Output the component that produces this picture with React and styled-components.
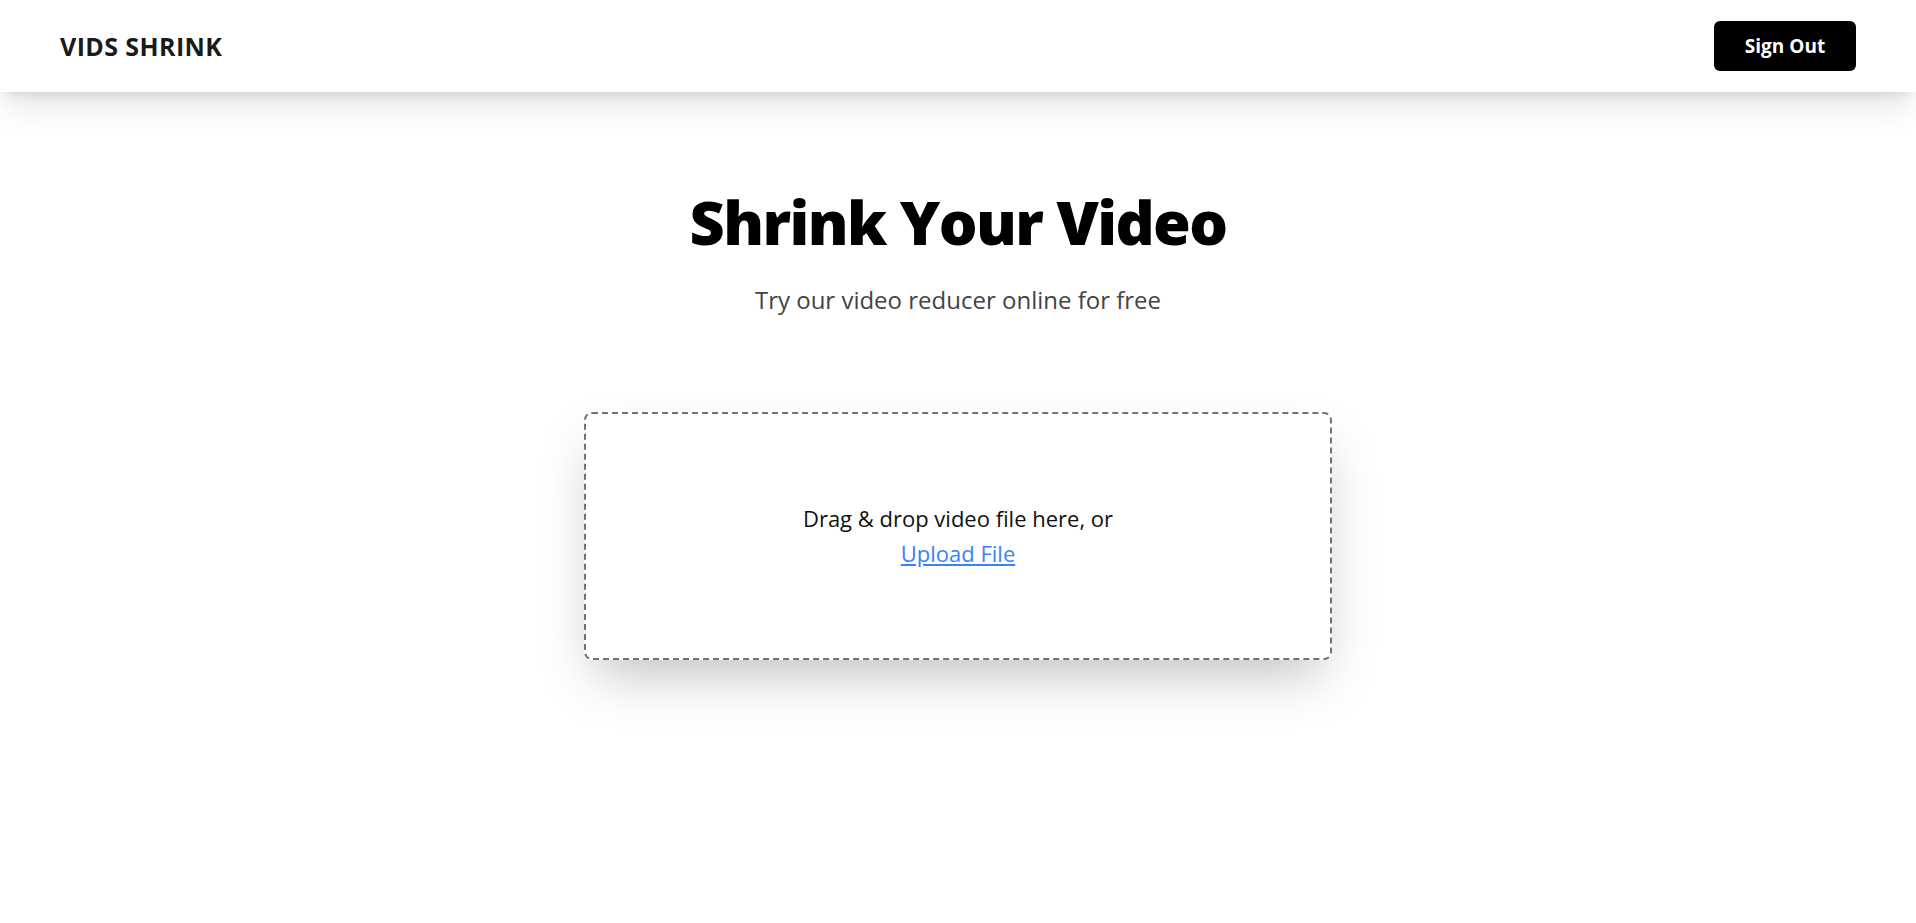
import React from "react";
import styled, { createGlobalStyle } from "styled-components";

const GlobalStyle = createGlobalStyle`
    html, body {
        margin: 0;
        padding: 0;
        background: #fff;
        font-family: "Open Sans", "Noto Sans", sans-serif;
        color: #111;
    }
`;

const Page = styled.div`
    min-height: 100vh;
`;

const Header = styled.header`
    height: 92px;
    padding: 0 60px;
    display: flex;
    align-items: center;
    justify-content: space-between;
    background: #fff;
    box-shadow: 0 20px 30px -5px rgba(0, 0, 0, 0.1), 0 8px 10px -6px rgba(0, 0, 0, 0.1);
    position: relative;
`;

const Logo = styled.div`
    font-size: 25px;
    font-weight: 700;
    letter-spacing: 0.4px;
    color: #1a1a1a;
`;

const SignOut = styled.button`
    width: 142px;
    height: 50px;
    border: none;
    border-radius: 6px;
    background: #000;
    color: #fff;
    font-family: inherit;
    font-size: 19px;
    font-weight: 700;
    cursor: pointer;
`;

const Main = styled.main`
    display: flex;
    flex-direction: column;
    align-items: center;
    padding: 92px 0 120px;
`;

const Title = styled.h1`
    margin: 0;
    font-size: 61px;
    line-height: 76px;
    font-weight: 800;
    letter-spacing: -1.6px;
    color: #000;
`;

const Subtitle = styled.p`
    margin: 24px 0 0;
    font-size: 24px;
    line-height: 32px;
    color: #444;
`;

const DropZone = styled.div`
    margin-top: 96px;
    width: 748px;
    height: 248px;
    box-sizing: border-box;
    border: 2px dashed #6b7280;
    border-radius: 8px;
    box-shadow: 0 25px 50px -12px rgba(0, 0, 0, 0.25);
    display: flex;
    flex-direction: column;
    align-items: center;
    justify-content: center;
    font-size: 22px;
    line-height: 35px;
`;

const UploadLink = styled.a`
    color: #3b82f6;
    text-decoration: underline;
    cursor: pointer;
`;

const App = () => {
    return (
        <Page>
            <GlobalStyle />
            <Header>
                <Logo>VIDS SHRINK</Logo>
                <SignOut>Sign Out</SignOut>
            </Header>
            <Main>
                <Title>Shrink Your Video</Title>
                <Subtitle>Try our video reducer online for free</Subtitle>
                <DropZone>
                    <span>Drag &amp; drop video file here, or</span>
                    <UploadLink>Upload File</UploadLink>
                </DropZone>
            </Main>
        </Page>
    );
};

export default App;
